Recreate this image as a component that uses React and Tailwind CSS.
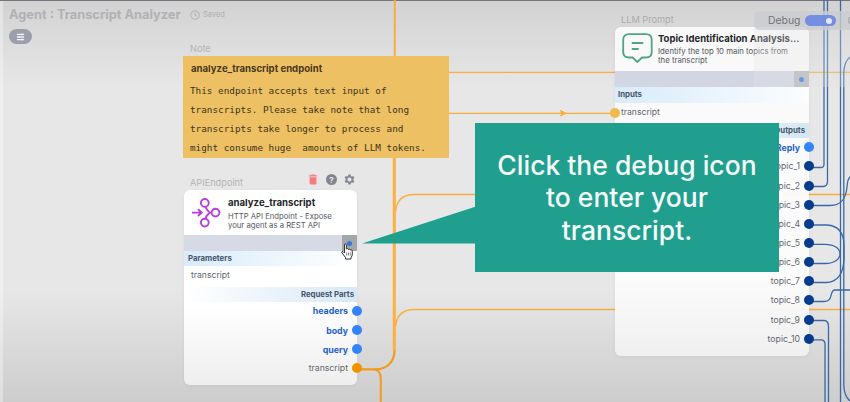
import React from "react";

const INTER = "font-['Inter','Liberation_Sans',sans-serif]";

function Wires() {
  return (
    <svg className="absolute inset-0" width="850" height="402" fill="none">
      <g stroke="#fbac3c" strokeWidth="1.3">
        <path d="M449 72.3H850M449 113.3H615" />
        <path d="M395.500 212Q397 194.500 414 194.500H850" />
        <path d="M395.500 327Q397 309.500 414 309.500H850" />
      </g>
      <path d="M559.500 109.500L567 113.300L559.500 117L561.500 113.300Z" fill="#fbac3c" />
      <path d="M394.800 0V56" stroke="#fbac3c" strokeWidth="2" />
      <path d="M394.300 150V350" stroke="#fdb03f" strokeWidth="3" />
      <path d="M394.500 350C394.500 363 386 369.300 376 369.300H357" stroke="#f39a1b" strokeWidth="2.200" />
      <path d="M374 369.300Q380.800 370 380.800 379V402" stroke="#f39a1b" strokeWidth="2" />
      <g stroke="#3b67a5" strokeWidth="1.300">
        <path d="M809 167.500H821Q824 167.500 824 164V0" />
        <path d="M809 186.500H823Q827.500 186.500 827.500 181V0" />
        <path d="M809 205.500H830C842 205.500 846 198 847 187Q847.500 179 850 177" />
        <path d="M809 225H827Q844 226 844 246V259Q843 282 826 282.500H809" />
        <path d="M809 244.300H825C845 244.300 845 263.500 825 263.500H809" />
        <path d="M809 301.500H824C834 301.500 829 290 835 290H850" />
        <path d="M809 320.500H824Q828.500 320.500 828.500 327V402" />
        <path d="M809 339.800H821Q825 339.800 825 344V402" />
        <path d="M840.500 0V402M843.800 73V385Q844 396 850 401" />
        <path d="M843.800 73Q844 62 850 57" />
      </g>
    </svg>
  );
}

function EndpointIcon() {
  return (
    <svg className="mt-[8px] ml-[7px] shrink-0" width="30" height="30" viewBox="0 0 30 30" fill="none" stroke="#b83de0" strokeWidth="1.900">
      <circle cx="13.800" cy="4.900" r="3.900" />
      <circle cx="24.500" cy="14.600" r="3.900" />
      <circle cx="13.800" cy="24.600" r="3.900" />
      <path d="M14.500 8.700C15 12 18.500 13.500 18.500 14.600S15 17 14.500 20.600M18 14.600H20.500M1 14.600H10.500M7 11.200L10.700 14.600L7 18" />
    </svg>
  );
}

function PromptIcon() {
  return (
    <svg className="mt-[6px] ml-[7px] shrink-0" width="31" height="31" viewBox="0 0 31 31" fill="none" stroke="#50a388" strokeWidth="1.800" strokeLinecap="round" strokeLinejoin="round">
      <path d="M7 1.200H24Q29.700 1.200 29.700 7V19Q29.700 24.500 24 24.500H20L15.300 29L10.600 24.500H7Q1.200 24.500 1.200 19V7Q1.200 1.200 7 1.200Z" />
      <path d="M10.500 10H20.500M10.500 16H16" />
    </svg>
  );
}

function Row({ label, bold, dot }) {
  return (
    <div className="flex h-[19.15px] items-center justify-end">
      <span className={bold ? "text-[8.8px] font-bold text-[#1c60cc]" : "pt-[1px] text-[8.7px] text-[#62666f]"}>{label}</span>
      <span className={"-mr-[5px] ml-[4px] size-[10px] rounded-full " + dot} />
    </div>
  );
}

function ApiNode() {
  return (
    <div className="absolute top-[190px] left-[184px] flex h-[195px] w-[173px] flex-col rounded-[6px] bg-linear-to-b from-white from-60% to-[#eeeeee] shadow-[0_1px_4px_rgba(0,0,0,0.05)]">
      <div className="flex h-[45px]">
        <EndpointIcon />
        <div className="ml-[7px] pt-[6px]">
          <div className="text-[9.6px] leading-[13px] font-bold whitespace-nowrap text-[#25262b]">analyze_transcript</div>
          <div className="mt-[3px] text-[7.7px] leading-[9px] whitespace-nowrap text-[#55585e]">
            HTTP API Endpoint - Expose
            <br />
            your agent as a REST API
          </div>
        </div>
      </div>
      <div className="flex h-[16px] justify-end bg-[#d5dae5]">
        <div className="flex w-[15px] items-center justify-center bg-[#a5a6a9]">
          <span className="size-[5px] rounded-full bg-[#3874dc]" />
        </div>
      </div>
      <div className="flex h-[15px] items-center bg-linear-to-r from-[#d8ebfa] to-white pl-[4px] text-[7.8px] font-bold text-[#47566b]">Parameters</div>
      <div className="flex h-[21px] items-center pb-[2px] pl-[7px] text-[8.6px] text-[#62666f]">transcript</div>
      <div className="flex h-[15px] items-center justify-end bg-linear-to-l from-[#d8e8f7] to-white pr-[3px] text-[7.8px] font-bold text-[#47566b]">Request Parts</div>
      <div className="-mt-[0.5px]">
        <Row label="headers" bold dot="bg-[#3384fb]" />
        <Row label="body" bold dot="bg-[#3384fb]" />
        <Row label="query" bold dot="bg-[#3384fb]" />
        <Row label="transcript" dot="bg-[#f39200]" />
      </div>
    </div>
  );
}

const TOPICS = ["topic_1", "topic_2", "topic_3", "topic_4", "topic_5", "topic_6", "topic_7", "topic_8", "topic_9", "topic_10"];

function PromptNode() {
  return (
    <div className="absolute top-[27px] left-[615px] flex h-[329px] w-[194px] flex-col rounded-[6px] bg-linear-to-b from-[#fafafa]/95 via-[#fdfdfd]/95 via-75% to-[#f1f1f1]/95 shadow-[0_1px_4px_rgba(0,0,0,0.05)]">
      <div className="flex h-[44px]">
        <PromptIcon />
        <div className="ml-[5px] pt-[5px]">
          <div className="text-[9.5px] leading-[13px] font-bold whitespace-nowrap text-[#25262b]">Topic Identification Analysis...</div>
          <div className="mt-[2px] text-[7.8px] leading-[9px] whitespace-nowrap text-[#55585e]">
            Identify the top 10 main topics from
            <br />
            the transcript
          </div>
        </div>
      </div>
      <div className="flex h-[16px] justify-end bg-[#d2d6e2]">
        <div className="flex w-[15px] items-center justify-center bg-[#b5b8c1]">
          <span className="size-[5px] rounded-full bg-[#2f7aec]" />
        </div>
      </div>
      <div className="flex h-[16px] items-center bg-linear-to-r from-[#d8ebfa] to-[#fbfdff] pl-[3px] text-[7.8px] font-bold text-[#47566b]">Inputs</div>
      <div className="flex h-[20px] items-center text-[8.6px] text-[#62666f]">
        <span className="-ml-[5px] size-[10px] rounded-full bg-[#efb94e]" />
        <span className="ml-[1px] pb-[2px]">transcript</span>
      </div>
      <div className="flex h-[15px] items-center justify-end bg-linear-to-l from-[#d5e7f4] to-white pr-[4px] text-[7.8px] font-bold text-[#47566b]">Outputs</div>
      <div className="-mt-[0.3px]">
        <Row label="Reply" bold dot="bg-[#3384fb]" />
        {TOPICS.map((t) => (
          <Row key={t} label={t} dot="bg-[#063c8e]" />
        ))}
      </div>
    </div>
  );
}

function NodeTools() {
  return (
    <div className="absolute top-[174px] left-[308px] flex items-center gap-[8px]">
      <svg width="10" height="11" viewBox="0 0 10 11" fill="#f67a7e">
        <path d="M3.500 .5H6.500L7 1.300H9V2.500H1V1.300H3ZM1.600 3.200H8.400V9.500Q8.400 10.500 7.400 10.500H2.600Q1.600 10.500 1.600 9.500Z" />
      </svg>
      <span className="flex size-[11px] items-center justify-center rounded-full bg-[#81858f] text-[8px] font-bold text-[#e9e9ea]">?</span>
      <svg className="-ml-[1px]" width="11" height="11" viewBox="0 0 24 24" fill="#858993">
        <path fillRule="evenodd" d="M9.500 1h5l.7 3.200 1.900 1.100 3.100-1 2.500 4.300-2.400 2.200v2.400l2.400 2.200-2.500 4.300-3.100-1-1.900 1.100-.7 3.200h-5l-.7-3.200-1.900-1.100-3.100 1-2.500-4.300 2.400-2.200v-2.400L1.300 8.600l2.500-4.300 3.100 1 1.900-1.100ZM12 7.500a4.500 4.500 0 1 0 0 9 4.500 4.500 0 0 0 0-9Z" />
      </svg>
    </div>
  );
}

function Note() {
  return (
    <div className="absolute top-[56px] left-[183px] h-[102px] w-[266px] bg-[#ecc063] pt-[7px] pl-[7px]">
      <div className="pl-[1px] text-[9.6px] leading-[12px] font-bold text-[#49391d]">analyze_transcript endpoint</div>
      <div className="mt-[6px] font-['DejaVu_Sans_Mono','Liberation_Mono',monospace] text-[9.33px] leading-[19.15px] whitespace-pre text-[#40331b]">
        {"This endpoint accepts text input of\ntranscripts. Please take note that long\ntranscripts take longer to process and\nmight consume huge  amounts of LLM tokens."}
      </div>
    </div>
  );
}

function Header() {
  return (
    <div className="relative flex h-[44px] flex-col pl-[9px]">
      <div className="flex h-[30px] items-center">
        <h1 className="w-[181px] text-[12.8px] font-bold whitespace-nowrap text-[#b1b1b4]">Agent : Transcript Analyzer</h1>
        <svg width="10" height="10" viewBox="0 0 10 10" fill="none" stroke="#aeaeb1">
          <circle cx="5" cy="5" r="4.300" />
          <path d="M5 2.200V5.200L6.800 6" />
        </svg>
        <span className="ml-[3px] text-[7.5px] text-[#aeaeb1]">Saved</span>
      </div>
      <div className="-mt-[1px] flex h-[15px] w-[23px] items-center justify-center rounded-full bg-[#9a9fab]">
        <svg width="9" height="8" viewBox="0 0 10 8" stroke="#edf0f7" strokeWidth="1.400">
          <path d="M1 1.200H9M1 4H9M1 6.800H9M6.500 0V2.400M3.500 2.800V5.200M6.500 5.600V8" />
        </svg>
      </div>
    </div>
  );
}

function DebugToggle() {
  return (
    <>
      <div className="absolute top-[29px] left-[754px] h-[58px] w-[96px] bg-[#e5e5e6]/30" />
      <div className="absolute top-[11px] left-[754px] flex h-[19px] w-[96px] items-center overflow-hidden rounded-l-[5px] bg-[#cbcccf]/80 pl-[14px]">
        <span className="w-[37px] shrink-0 text-[10.4px] text-[#71747a]">Debug</span>
        <span className="flex h-[11px] w-[31px] shrink-0 items-center justify-end rounded-full bg-[#6c86e3]/90 pr-[4px]">
          <span className="size-[6px] rounded-full bg-[#e5eaf8]" />
        </span>
        <span className="ml-[12px] size-[9px] shrink-0 rounded-full border border-[#96999f]" />
      </div>
    </>
  );
}

function Callout() {
  return (
    <>
      <svg className="absolute top-[206px] left-[362px]" width="114" height="38" fill="#209f8f">
        <path d="M0 37.500L114 .5V37.500Z" />
      </svg>
      <div className="absolute top-[123px] left-[475px] flex h-[149px] w-[304px] flex-col items-center bg-[#209f8f] pt-[26px] text-center text-[26.5px] leading-[32.3px] font-medium whitespace-nowrap text-[#f5fcfa]">
        <span>Click the debug icon</span>
        <span>to enter your</span>
        <span>transcript.</span>
      </div>
    </>
  );
}

function Cursor() {
  return (
    <svg className="absolute top-[243px] left-[341px]" width="12" height="17" viewBox="0 0 12 17" fill="#fff" stroke="#333" strokeWidth="1" strokeLinejoin="round">
      <path d="M3.500 10V2Q3.500 .8 4.400 .8T5.400 2V6Q7 5 7.400 6.400Q9 5.500 9.300 7Q11.300 6.300 11.300 8.200V11Q11.300 13 10 14.500V16H4.500V14.500L.8 9.700Q.5 8.300 2 8.500Z" />
      <path d="M5.600 9.500V12.500M7.500 9.500V12.500M9.300 9.500V12.500" strokeWidth=".6" />
    </svg>
  );
}

export default function App() {
  return (
    <div className={"relative h-[402px] w-[850px] overflow-hidden bg-linear-to-b from-[#d2d2d3] via-[#e7e7e8] via-22% to-[#cfcfcf] " + INTER}>
      <div className="absolute inset-x-0 top-[90px] h-[200px] bg-[#e7e7e8]" />
      <div className="absolute inset-x-0 top-[290px] h-[112px] bg-linear-to-b from-[#e7e7e8] to-[#cdcdcd]" />
      <div className="absolute inset-y-0 left-0 w-[3px] bg-white/35" />
      <div className="absolute inset-x-0 top-0 h-px bg-[#77737d]" />
      <Header />
      <Wires />
      <div className="absolute top-[43px] left-[190px] text-[9.2px] leading-[12px] text-[#b4b4b6]">Note</div>
      <Note />
      <div className="absolute top-[177px] left-[190px] text-[9.2px] leading-[12px] text-[#b4b4b6]">APIEndpoint</div>
      <NodeTools />
      <ApiNode />
      <div className="absolute top-[14px] left-[621px] text-[9.2px] leading-[12px] text-[#aaaaad]">LLM Prompt</div>
      <PromptNode />
      <DebugToggle />
      <Callout />
      <Cursor />
    </div>
  );
}
